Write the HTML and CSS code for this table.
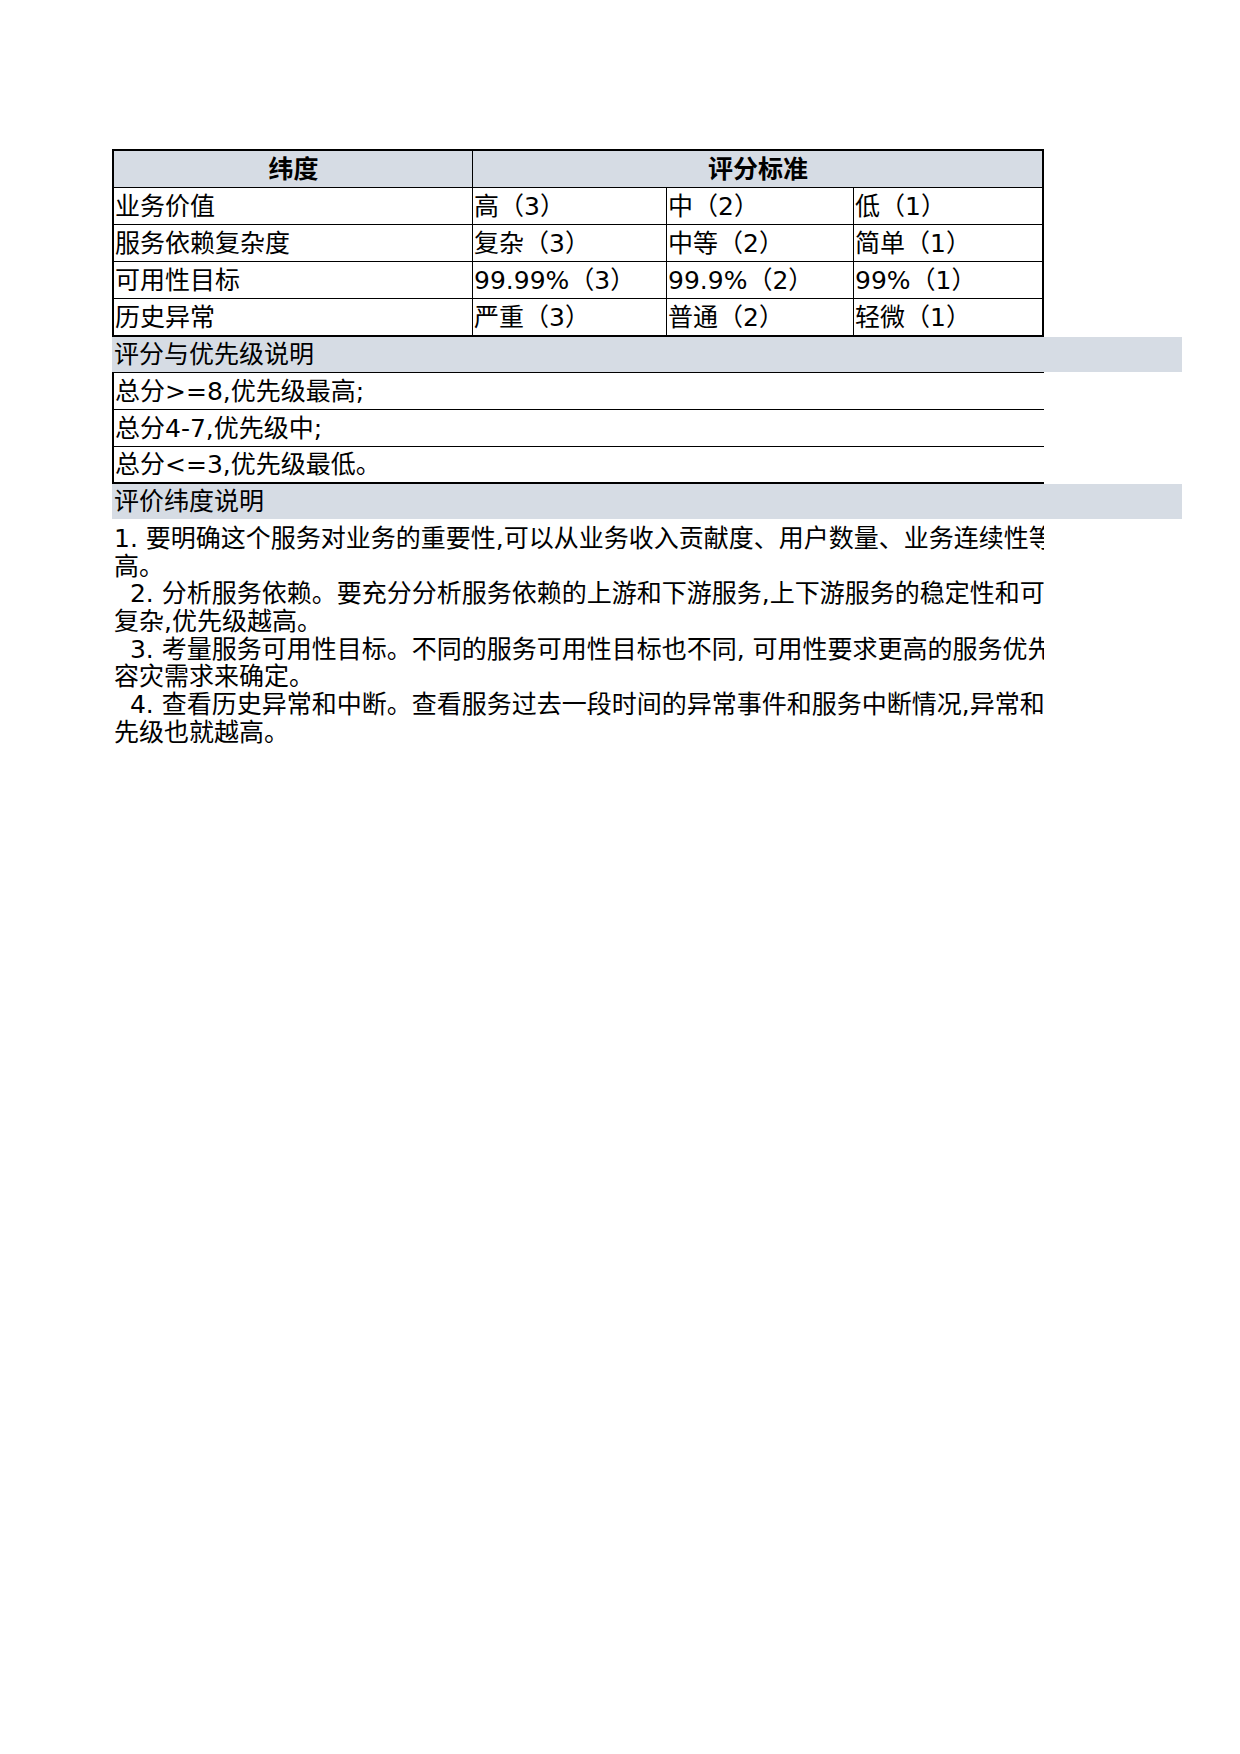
FILE: index.html
```html
<!DOCTYPE html>
<html lang="zh-CN">
<head>
<meta charset="utf-8">
<title>服务优先级评分</title>
<link rel="stylesheet" href="styles.css">
</head>
<body>
<div class="page">
  <div class="score-table">
    <div class="row head">
      <div class="cell center bold">纬度</div>
      <div class="cell center bold span3">评分标准</div>
    </div>
    <div class="row">
      <div class="cell">业务价值</div>
      <div class="cell">高（3）</div>
      <div class="cell">中（2）</div>
      <div class="cell">低（1）</div>
    </div>
    <div class="row">
      <div class="cell">服务依赖复杂度</div>
      <div class="cell">复杂（3）</div>
      <div class="cell">中等（2）</div>
      <div class="cell">简单（1）</div>
    </div>
    <div class="row">
      <div class="cell">可用性目标</div>
      <div class="cell">99.99%（3）</div>
      <div class="cell">99.9%（2）</div>
      <div class="cell">99%（1）</div>
    </div>
    <div class="row">
      <div class="cell">历史异常</div>
      <div class="cell">严重（3）</div>
      <div class="cell">普通（2）</div>
      <div class="cell">轻微（1）</div>
    </div>
  </div>

  <div class="band">评分与优先级说明</div>
  <div class="rules">
    <div class="rule">总分&gt;=8,优先级最高;</div>
    <div class="rule">总分4-7,优先级中;</div>
    <div class="rule">总分&lt;=3,优先级最低。</div>
  </div>

  <div class="band">评价纬度说明</div>
  <div class="notes">
    <div class="line">1. 要明确这个服务对业务的重要性,可以从业务收入贡献度、用户数量、业务连续性等方面来评估,越重要的服务优先级越</div>
    <div class="line">高。</div>
    <div class="line">  2. 分析服务依赖。要充分分析服务依赖的上游和下游服务,上下游服务的稳定性和可用性都会影响服务本身,依赖越</div>
    <div class="line">复杂,优先级越高。</div>
    <div class="line">  3. 考量服务可用性目标。不同的服务可用性目标也不同, 可用性要求更高的服务优先级越高,可根据SLA和</div>
    <div class="line">容灾需求来确定。</div>
    <div class="line">  4. 查看历史异常和中断。查看服务过去一段时间的异常事件和服务中断情况,异常和中断越频繁的服务,优</div>
    <div class="line">先级也就越高。</div>
  </div>
</div>
</body>
</html>
```

FILE: styles.css
```css
html, body {
  margin: 0;
  padding: 0;
  background: #ffffff;
}

body {
  font-family: "DejaVu Sans", "Noto Sans CJK SC", sans-serif;
  font-size: 25px;
  color: #000000;
}

.page {
  padding: 149px 0 0 112px;
}

.score-table {
  box-sizing: border-box;
  width: 932px;
  border: 2px solid #000000;
}

.row {
  display: grid;
  grid-template-columns: 359px 194px 187px 188px;
  height: 37px;
  box-sizing: border-box;
  border-bottom: 1px solid #000000;
}

.row:last-child {
  border-bottom: none;
  height: 36px;
}

.row.head {
  background: #d6dce4;
}

.cell {
  box-sizing: border-box;
  display: flex;
  align-items: center;
  padding-left: 1px;
  border-right: 1px solid #000000;
  white-space: nowrap;
  overflow: hidden;
  line-height: 1;
}

.cell:last-child {
  border-right: none;
}

.span3 {
  grid-column: 2 / 5;
}

.center {
  justify-content: center;
}

.bold {
  font-weight: bold;
}

.band {
  box-sizing: border-box;
  width: 1070px;
  height: 35px;
  background: #d6dce4;
  display: flex;
  align-items: center;
  padding-left: 2px;
  line-height: 1;
}

.rules {
  box-sizing: border-box;
  width: 932px;
  border-top: 1px solid #000000;
  border-left: 2px solid #000000;
}

.rule {
  box-sizing: border-box;
  height: 37px;
  border-bottom: 1px solid #000000;
  display: flex;
  align-items: center;
  padding-left: 1px;
  line-height: 1;
  white-space: nowrap;
}

.rule:last-child {
  border-bottom-width: 2px;
}

.notes {
  width: 932px;
  overflow: hidden;
  padding: 6px 0 0 2px;
  box-sizing: border-box;
}

.line {
  white-space: pre;
  line-height: 27.7px;
  height: 27.7px;
}
```
